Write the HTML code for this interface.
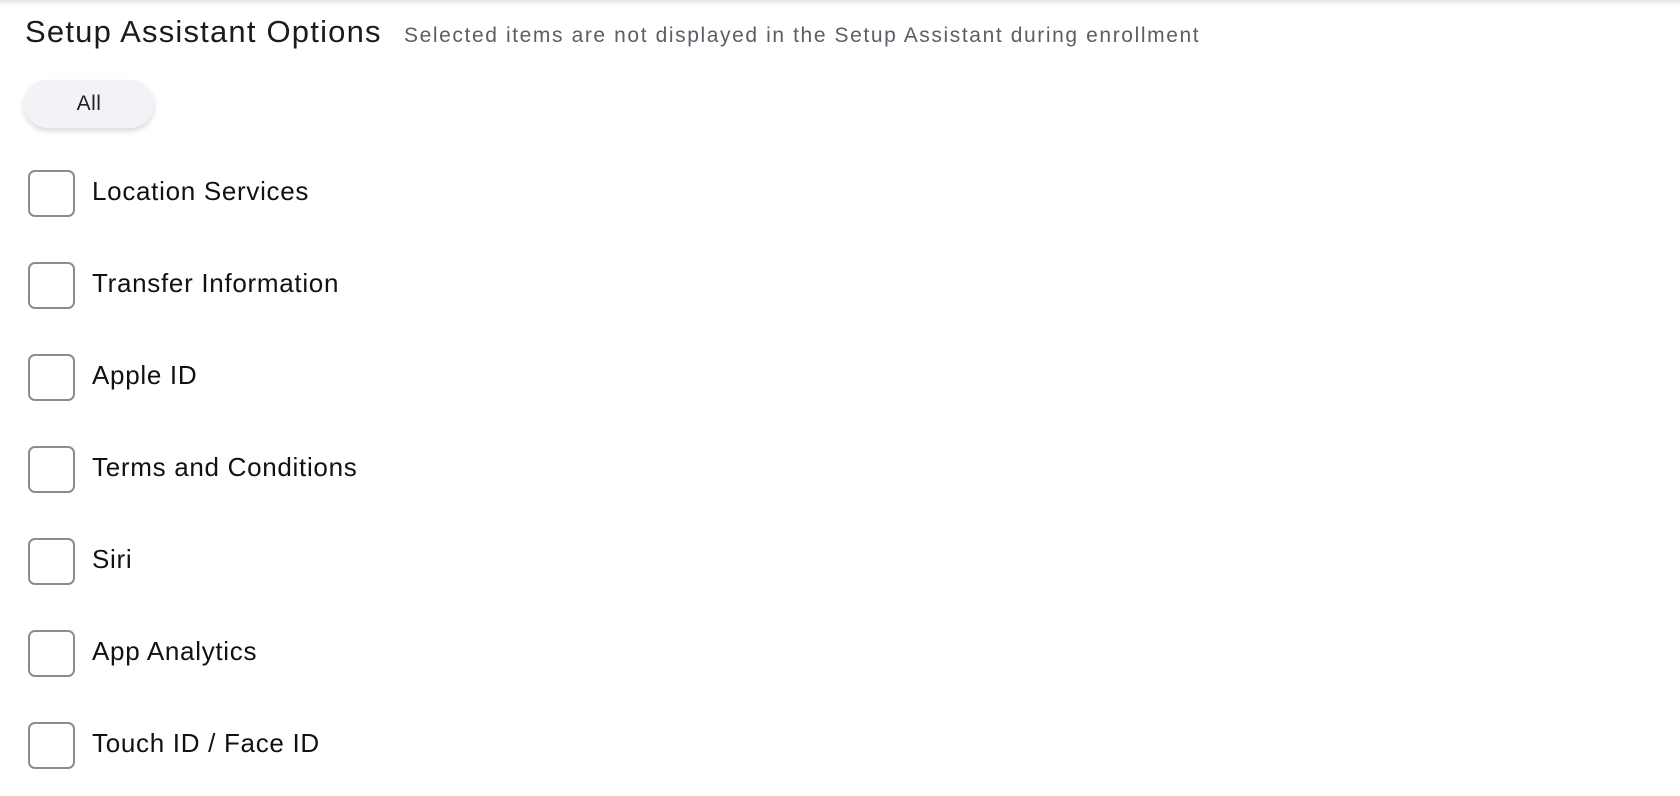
<!DOCTYPE html>
<html><head><style>
body{margin:0;width:1680px;height:796px;background:#fff;font-family:"Liberation Sans",sans-serif;overflow:hidden;position:relative}
.top{position:absolute;left:0;top:0;width:1680px;height:6px;background:linear-gradient(#e6e6e6,#fff)}
.title{position:absolute;left:25px;top:14px;font-size:31px;letter-spacing:1.2px;color:#1b1b1f;white-space:nowrap}
.sub{position:absolute;left:404px;top:24px;font-size:21px;color:#5d5d66;letter-spacing:1.6px;white-space:nowrap}
.btn{position:absolute;left:24px;top:80px;width:130px;height:48px;border-radius:24px;background:#f2f3f7;box-shadow:0 3px 6px rgba(0,0,0,.15);text-align:center;line-height:48px;font-size:21px;color:#222;letter-spacing:.5px}
.row{position:absolute;left:28px;height:47px}
.cb{position:absolute;left:0;top:0;width:43px;height:43px;border:2px solid #8a8d94;border-radius:7px}
.lb{position:absolute;left:64px;top:6px;font-size:26px;color:#111;white-space:nowrap;letter-spacing:.7px}
</style></head><body>
<div class="top"></div>
<div class="title">Setup Assistant Options</div>
<div class="sub">Selected items are not displayed in the Setup Assistant during enrollment</div>
<div class="btn">All</div>
<div class="row" style="top:170px"><div class="cb"></div><div class="lb">Location Services</div></div>
<div class="row" style="top:262px"><div class="cb"></div><div class="lb">Transfer Information</div></div>
<div class="row" style="top:354px"><div class="cb"></div><div class="lb">Apple ID</div></div>
<div class="row" style="top:446px"><div class="cb"></div><div class="lb">Terms and Conditions</div></div>
<div class="row" style="top:538px"><div class="cb"></div><div class="lb">Siri</div></div>
<div class="row" style="top:630px"><div class="cb"></div><div class="lb">App Analytics</div></div>
<div class="row" style="top:722px"><div class="cb"></div><div class="lb">Touch ID / Face ID</div></div>
</body></html>
